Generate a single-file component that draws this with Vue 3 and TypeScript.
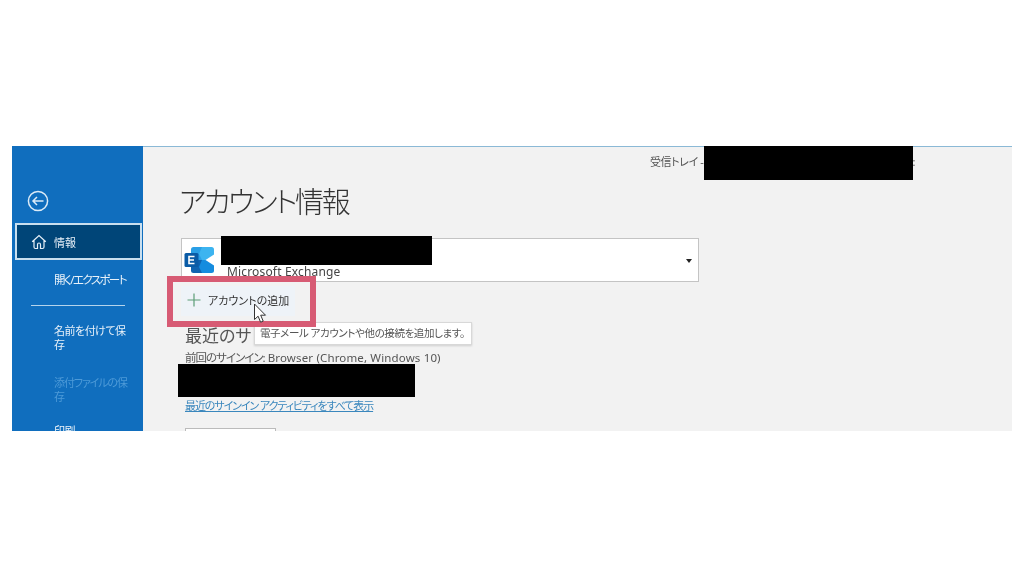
<script setup lang="ts">
const navItems = [
  { id: 'open', label: '開く/エクスポート', cls: 'open' },
];
</script>

<template>
  <div class="page">
    <div class="window">
      <aside class="side">
        <svg class="back" width="22" height="22" viewBox="0 0 22 22" fill="none" stroke="#dcebf7" stroke-width="1.5">
          <circle cx="11" cy="11" r="9.6" />
          <path d="M16.5 11H6M10 7l-4 4 4 4" />
        </svg>
        <div class="nav-item active">
          <svg width="16" height="16" viewBox="0 0 16 16" fill="none" stroke="#e6f0f8" stroke-width="1.2">
            <path d="M1.2 7.8 8 1.5l6.8 6.3M3 6.6V13a1.5 1.5 0 0 0 1.5 1.5h2V10.5a1.5 1.5 0 0 1 3 0v4h2A1.5 1.5 0 0 0 13 13V6.6" />
          </svg>
          <span>情報</span>
        </div>
        <div v-for="n in navItems" :key="n.id" class="nav-item plain" :class="n.cls">{{ n.label }}</div>
        <div class="divider"></div>
        <div class="nav-text">名前を付けて保<br />存</div>
        <div class="nav-text faint">添付ファイルの保<br />存</div>
        <div class="nav-text print">印刷</div>
      </aside>

      <main class="main">
        <div class="topline">
          <span>受信トレイ -</span>
          <span class="top-rest">:</span>
        </div>
        <h1 class="title">アカウント情報</h1>

        <div class="account">
          <svg class="ex" width="31" height="28" viewBox="0 0 31 28">
            <path d="M7 3.5Q7 1 9.5 1H18l2 6-2 7H7z" fill="#2a9fe6" />
            <path d="M18 1h9.5Q30 1 30 3.5V8.5L21.5 14H18l-3-6z" fill="#3cb4f0" />
            <path d="M7 14h11l3 6-3 7H9.5Q7 27 7 24.5z" fill="#0f63b0" />
            <path d="M18 14h3.5L30 19.5v5Q30 27 27.5 27H18l-3-6z" fill="#158cdf" />
            <rect x="0.5" y="7" width="14" height="14" rx="1.5" fill="#0a5ba6" />
            <path d="M10.5 10.5H5v7h5.5M5 14h5" stroke="#fff" stroke-width="1.6" fill="none" />
          </svg>
          <span class="account-type">Microsoft Exchange</span>
          <span class="caret"></span>
        </div>

        <button class="add">
          <svg width="16" height="16" viewBox="0 0 16 16" stroke="#5d9e77" stroke-width="1.2">
            <path d="M8 1.5v13M1.5 8h13" />
          </svg>
          <span>アカウントの追加</span>
        </button>

        <h2 class="recent">最近のサ</h2>
        <p class="last"><span class="jp-tight">前回のサインイン:</span> <span class="latin">Browser (Chrome, Windows 10)</span></p>
        <div class="spacer"></div>
        <a class="link">最近のサインイン アクティビティをすべて表示</a>
        <div class="box"></div>

        <div class="tooltip">電子メール アカウントや他の接続を追加します。</div>
        <div class="highlight"></div>
        <svg class="cursor" width="14" height="21" viewBox="0 0 14 21">
          <path d="M1.5 1v15.5l3.6-3.3 2.5 6 2.6-1.1-2.5-5.9h4.8z" fill="#fff" stroke="#333" stroke-width="1" />
        </svg>
        <div class="black b-top"></div>
        <div class="black b-name"></div>
        <div class="black b-info"></div>
      </main>
    </div>
  </div>
</template>

<style>
html, body { margin: 0; background: #fff; }
</style>

<style scoped>
.page {
  width: 1024px;
  height: 576px;
  padding: 146px 12px 0;
  box-sizing: border-box;
  background: #fff;
  overflow: hidden;
  font-family: "Noto Sans", "Noto Sans CJK JP", sans-serif;
  font-feature-settings: "palt";
}
.window {
  display: flex;
  width: 1000px;
  height: 285px;
  overflow: hidden;
  background: #f2f2f2;
  filter: blur(0.35px);
}
.side {
  width: 131px;
  flex: none;
  background: #106ebe;
  color: #e8f1f9;
  display: flex;
  flex-direction: column;
  padding-top: 44px;
  box-sizing: border-box;
}
.side > * { flex: none; }
.back { margin-left: 15px; }
.nav-item {
  display: flex;
  align-items: center;
  font-size: 11.5px;
  box-sizing: border-box;
}
.nav-item.active {
  margin: 11px 1px 0 3px;
  height: 37px;
  background: #004578;
  border: 2px solid #c9dfef;
  padding: 0 0 0 14px;
  gap: 7px;
  font-size: 11px;
}
.nav-item.plain {
  margin-top: 10px;
  height: 18px;
  padding-left: 42px;
  white-space: nowrap;
  letter-spacing: -1.6px;
}
.divider {
  margin: 17px 0 0 19px;
  width: 94px;
  height: 1px;
  background: #b5d4ec;
}
.nav-text {
  margin: 18px 0 0 42px;
  font-size: 11px;
  line-height: 14px;
  letter-spacing: -0.5px;
  white-space: nowrap;
}
.nav-text.faint { color: #4d9ad8; margin-top: 24px; letter-spacing: -1.1px; }
.nav-text.print { margin-top: 20px; }
.main {
  position: relative;
  flex: 1;
  min-width: 0;
  border-top: 1px solid #8bb9d6;
  box-sizing: border-box;
  padding-left: 38px;
  color: #444;
}
.topline {
  position: absolute;
  left: 507px;
  top: 7px;
  width: 265px;
  display: flex;
  justify-content: space-between;
  font-size: 11px;
  line-height: 15px;
  color: #555;
  letter-spacing: -0.4px;
}
.title {
  margin: 36px 0 0 -2px;
  font-size: 29px;
  line-height: 38px;
  font-weight: 300;
  color: #333;
  letter-spacing: -2.4px;
}
.account {
  margin-top: 17px;
  width: 518px;
  height: 44px;
  box-sizing: border-box;
  border: 1px solid #c4c4c4;
  background: #fff;
  display: flex;
  align-items: flex-end;
  position: relative;
  padding-left: 3px;
}
.ex { position: absolute; left: 2px; top: 7px; }
.account-type {
  margin-left: 42px;
  margin-bottom: 2px;
  font-size: 12px;
  line-height: 15px;
  color: #444;
  letter-spacing: 0.16px;
}
.caret {
  position: absolute;
  right: 6px;
  top: 20px;
  border: 3.5px solid transparent;
  border-top: 4px solid #222;
  border-bottom: 0;
}
.add {
  display: flex;
  align-items: center;
  gap: 6px;
  margin: 4px 0 0;
  width: 114px;
  height: 30px;
  padding: 0 0 2px 5px;
  border: 0;
  background: #eef3f8;
  color: #333;
  font: inherit;
  font-size: 11px;
  font-feature-settings: inherit;
  white-space: nowrap;
}
.recent {
  margin: 8px 0 0 4px;
  font-size: 17px;
  line-height: 24px;
  font-weight: 400;
  color: #555;
  white-space: nowrap;
}
.last {
  margin: 3px 0 0 4px;
  font-size: 11.5px;
  line-height: 14px;
  color: #555;
  white-space: nowrap;
}
.jp-tight { letter-spacing: -1px; }
.latin { letter-spacing: 0.15px; }
.spacer { height: 32px; }
.link {
  display: block;
  margin: 1px 0 0 4px;
  font-size: 11px;
  line-height: 15px;
  color: #3a87bd;
  text-decoration: underline;
  white-space: nowrap;
  letter-spacing: -1.1px;
}
.box {
  margin: 15px 0 0 4px;
  width: 91px;
  height: 30px;
  border: 1px solid #bbb;
  background: #fff;
  box-sizing: border-box;
}
.tooltip {
  position: absolute;
  left: 111px;
  top: 175px;
  width: 218px;
  height: 23px;
  box-sizing: border-box;
  padding-left: 5px;
  background: #fff;
  border: 1px solid #d8d8d8;
  box-shadow: 0 1px 2px rgba(0, 0, 0, .15);
  font-size: 10.5px;
  line-height: 21px;
  color: #555;
  white-space: nowrap;
  letter-spacing: -0.4px;
}
.highlight {
  position: absolute;
  left: 24px;
  top: 129px;
  width: 149px;
  height: 51px;
  box-sizing: border-box;
  border: 6px solid #d75b74;
}
.cursor { position: absolute; left: 110px; top: 156px; }
.black { position: absolute; background: #000; }
.b-top { left: 561px; top: -1px; width: 209px; height: 34px; }
.b-name { left: 78px; top: 89px; width: 211px; height: 29px; }
.b-info { left: 35px; top: 217px; width: 237px; height: 33px; }
</style>
